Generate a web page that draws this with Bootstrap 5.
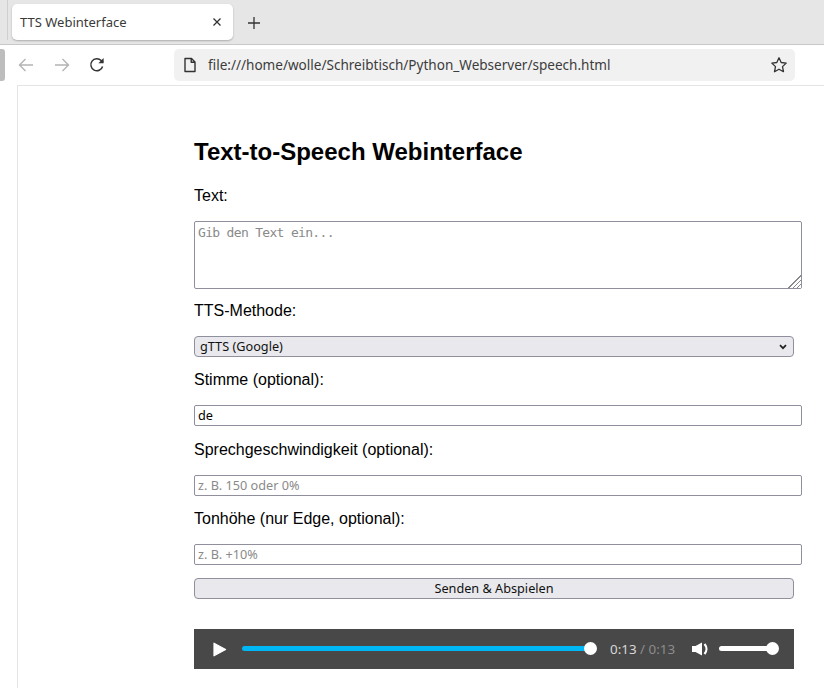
<!DOCTYPE html>
<html lang="de">
<head>
  <meta charset="utf-8">
  <title>TTS Webinterface</title>
  <link href="https://cdn.jsdelivr.net/npm/bootstrap@5.3.0/dist/css/bootstrap.min.css" rel="stylesheet">
  <style>
    html, body { height: 688px; overflow: hidden; background: #fff; }
    body { font-family: "Liberation Sans", Arial, sans-serif; color: #000; }

    /* browser frame */
    .tab-strip { height: 45px; background: #e6e6e6; border-bottom: 1px solid #c8c8c8; padding: 4px 0 0 7px; }
    .tab-sep { width: 1px; height: 40px; margin: -4px 4px 0 0; background: #cfcfcf; }
    .tab-item { width: 221px; height: 36px; background: #fff; border-radius: 5px; padding: 0 11px 0 8px; font: 13px "Noto Sans", "Open Sans", sans-serif; color: #3a3a3a; box-shadow: 0 1px 2px rgba(0,0,0,.25); }
    .tab-add { margin-left: 14px; margin-top: -2px; }
    .tool-bar { height: 40px; background: #fff; }
    .side-grip { width: 5px; height: 32px; background: #bdbdbd; border-radius: 0 3px 3px 0; }
    .nav-icons { width: 169px; padding-left: 12px; gap: 18px; }
    .addr-bar { width: 621px; height: 32px; background: #f1f1f1; border-radius: 5px; padding: 0 7px 0 9px; font: 13.55px "Noto Sans", "Open Sans", sans-serif; color: #3c3c3c; }
    .addr-text { margin-left: 11px; }
    .page-area { margin-left: 17px; border-left: 1px solid #e4e4e4; border-top: 1px solid #e4e4e4; height: 603px; padding: 49px 0 0 176px; }

    /* form */
    .tts-form { width: 608px; }
    .tts-form h1 { font-size: 24px; font-weight: 700; line-height: 34px; margin: 0; }
    .fld-label { display: block; font-size: 16px; line-height: 24px; margin: 11px 0 13px; }
    .fld-label.first { margin-top: 15px; }
    .fld-label.tight { margin-top: 10px; }
    .fld-label.loose { margin-top: 12px; }
    .tts-form textarea, .tts-form input { display: block; width: 608px; border: 1px solid #8f8f9d; border-radius: 2px; background: #fff; padding: 1px 3px; outline: none; }
    .tts-form textarea { height: 68px; padding-top: 3px; font: 13px/15px "DejaVu Sans Mono", monospace; letter-spacing: -.68px; }
    .tts-form textarea::-webkit-resizer { background: linear-gradient(135deg, #fff 50%, transparent 50%), repeating-linear-gradient(135deg, #8a8a8a 0 1px, #fff 1px 3px); }
    .tts-form input { height: 21px; padding: 0 3px 2px; font: 12.7px/17px "Noto Sans", "Open Sans", sans-serif; }
    .tts-form ::placeholder { color: #8a8a8a; opacity: 1; }
    .tts-form select, .tts-form button { display: block; width: 600px; height: 21px; border: 1px solid #8f8f9d; border-radius: 4px; background-color: #e9e9ed; font: 12.7px "Noto Sans", "Open Sans", sans-serif; color: #111; padding: 0 1px 2px; }
    .tts-form select { appearance: none; padding-left: 5px; background-image: url("data:image/svg+xml,%3Csvg xmlns='http://www.w3.org/2000/svg' width='8' height='6' viewBox='0 0 8 6'%3E%3Cpath d='M1 1.200l3 3 3-3' stroke='%23222' stroke-width='1.700' fill='none'/%3E%3C/svg%3E"); background-repeat: no-repeat; background-position: right 6px center; }
    .tts-form button { margin-top: 13px; }

    /* audio player */
    .audio-bar { width: 600px; height: 40px; margin-top: 30px; background: #484848; padding: 0 14px 0 18px; }
    .seek-track { position: relative; width: 348px; height: 5px; margin: 0 0 2px 15px; border-radius: 3px; background: #00b7f5; }
    .vol-track { position: relative; width: 53px; height: 5px; margin: 0 0 2px 10px; border-radius: 3px; background: #fff; }
    .knob { position: absolute; top: -4px; right: -7px; width: 13px; height: 13px; border-radius: 50%; background: #fff; }
    .time-text { margin-left: 20px; width: 65px; font: 13.4px "Noto Sans", "Open Sans", sans-serif; color: #d8d8d8; white-space: nowrap; }
    .time-text span { color: #8c8c8c; }
    .vol-icon { margin-left: 17px; }
  </style>
</head>
<body>
  <div class="tab-strip d-flex align-items-start">
    <div class="tab-sep"></div>
    <div class="tab-item d-flex align-items-center justify-content-between">
      <span>TTS Webinterface</span>
      <svg width="10" height="10" viewBox="0 0 10 10"><path d="M1.500 1.500l7 7M8.500 1.500l-7 7" stroke="#333" stroke-width="1.300" fill="none"/></svg>
    </div>
    <svg class="tab-add align-self-center" width="14" height="14" viewBox="0 0 14 14"><path d="M7 1v12M1 7h12" stroke="#333" stroke-width="1.300" fill="none"/></svg>
  </div>

  <div class="tool-bar d-flex align-items-center">
    <div class="side-grip"></div>
    <div class="nav-icons d-flex align-items-center">
      <svg width="18" height="16" viewBox="0 0 18 16"><path d="M16 8H2.500M8.500 2L2.500 8l6 6" stroke="#b4b4b4" stroke-width="1.400" fill="none"/></svg>
      <svg width="18" height="16" viewBox="0 0 18 16"><path d="M2 8h13.500M9.500 2l6 6-6 6" stroke="#b4b4b4" stroke-width="1.400" fill="none"/></svg>
      <svg width="16" height="16" viewBox="0 0 16 16"><path d="M13.600 9.500A6 6 0 1 1 12.200 3.600L14 5.400" stroke="#333" stroke-width="1.500" fill="none"/><path d="M14.600 1v5.200H9.400z" fill="#333"/></svg>
    </div>
    <div class="addr-bar d-flex align-items-center">
      <svg width="14" height="16" viewBox="0 0 14 16"><path d="M2 1.500h6.500L12 5v9.500H2zM8.200 1.500V5.300H12" stroke="#333" stroke-width="1.400" fill="none" stroke-linejoin="round"/></svg>
      <span class="addr-text flex-grow-1">file:///home/wolle/Schreibtisch/Python_Webserver/speech.html</span>
      <svg width="18" height="18" viewBox="0 0 18 18"><path d="M9 1.800l2.200 4.700 5 .6-3.700 3.500 1 5.100L9 13.200l-4.500 2.500 1-5.100L1.800 7.100l5-.6z" stroke="#333" stroke-width="1.300" fill="none" stroke-linejoin="round"/></svg>
    </div>
  </div>

  <div class="page-area">
    <form class="tts-form" onsubmit="return false">
      <h1>Text-to-Speech Webinterface</h1>

      <label class="fld-label first" for="txt">Text:</label>
      <textarea id="txt" placeholder="Gib den Text ein..."></textarea>

      <label class="fld-label tight" for="method">TTS-Methode:</label>
      <select id="method">
        <option>gTTS (Google)</option>
      </select>

      <label class="fld-label" for="voice">Stimme (optional):</label>
      <input id="voice" type="text" value="de">

      <label class="fld-label loose" for="rate">Sprechgeschwindigkeit (optional):</label>
      <input id="rate" type="text" placeholder="z. B. 150 oder 0%">

      <label class="fld-label" for="pitch">Tonhöhe (nur Edge, optional):</label>
      <input id="pitch" type="text" placeholder="z. B. +10%">

      <button type="button">Senden &amp; Abspielen</button>

      <div class="audio-bar d-flex align-items-center">
        <svg width="15" height="15" viewBox="0 0 15 15"><path d="M2 1.200L13.600 7.500 2 13.800z" fill="#fff" stroke="#fff" stroke-width="1.200" stroke-linejoin="round"/></svg>
        <div class="seek-track"><div class="knob"></div></div>
        <div class="time-text">0:13 <span>/ 0:13</span></div>
        <svg class="vol-icon" width="17" height="16" viewBox="0 0 17 16"><path d="M0 5h3.500L10 1.500v13L3.500 11H0z" fill="#fff"/><path d="M12.500 3c2.600 3 2.600 7 0 10" stroke="#fff" stroke-width="2.200" fill="none"/></svg>
        <div class="vol-track"><div class="knob"></div></div>
      </div>
    </form>
  </div>

  <script src="https://cdn.jsdelivr.net/npm/bootstrap@5.3.0/dist/js/bootstrap.bundle.min.js"></script>
</body>
</html>
